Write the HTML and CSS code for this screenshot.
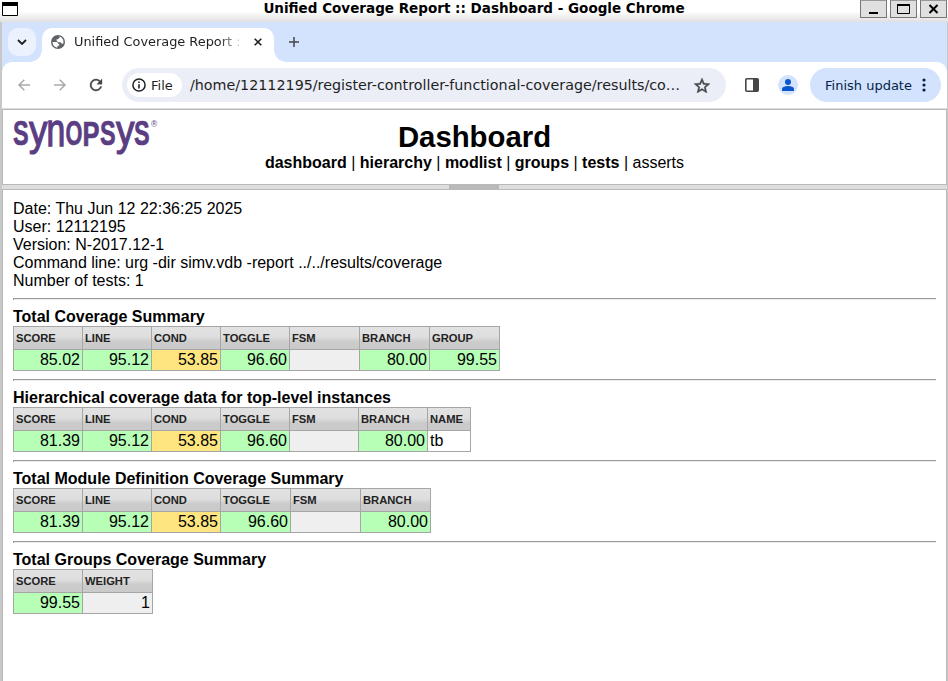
FILE: index.html
```html
<!DOCTYPE html>
<html lang="en">
<head>
<meta charset="utf-8">
<title>Unified Coverage Report :: Dashboard</title>
<link rel="stylesheet" href="styles.css">
</head>
<body>
<header class="titlebar">
  <svg class="window-menu" width="16" height="14" viewBox="0 0 16 14"><path d="M.5.5h15v13H.5z" fill="#fff" stroke="#000"/><path d="M0 0h16v4H0z"/></svg>
  <span class="window-title">Unified Coverage Report :: Dashboard - Google Chrome</span>
  <div class="window-buttons">
    <span class="wbtn"><svg width="25" height="16" viewBox="0 0 25 16"><path d="M8 11h9v2H8z"/></svg></span>
    <span class="wbtn"><svg width="25" height="16" viewBox="0 0 25 16"><path d="M6.500 4v8.500h12V4" fill="none" stroke="#000"/><path d="M6 3h13v2H6z"/></svg></span>
    <span class="wbtn"><svg width="25" height="16" viewBox="0 0 25 16"><path d="M8.500 4l8 8M16.500 4l-8 8" fill="none" stroke="#000" stroke-width="2"/></svg></span>
  </div>
</header>
<div class="window">
  <div class="tabstrip">
    <span class="tab-search"><svg width="10" height="6" viewBox="0 0 10 6"><path d="M1 1l4 4 4-4" fill="none" stroke="#1f1f1f" stroke-width="1.800"/></svg></span>
    <div class="tab">
      <svg class="globe" width="14" height="14" viewBox="0 0 14 14"><circle cx="7" cy="7" r="7" fill="#5f6368"/><path d="M1.500 7h3.800c1.300 0 1.600.7 1.600 1.700h1.300v2H6.500v1.800C3.800 12.500 1.500 10 1.500 7zM8.500 1.600v1.200L7 4.200H5.600v1.500l1.600 1.500h2.300l1.500 1.600h1.200c1-3-.7-6.300-3.700-7.200z" fill="#fff"/></svg>
      <span class="tab-title">Unified Coverage Report :</span>
      <svg width="8" height="8" viewBox="0 0 8 8"><path d="M.7.7l6.600 6.600M7.300.7L.7 7.300" stroke="#1f1f1f" stroke-width="1.600"/></svg>
    </div>
    <svg class="plus" width="10" height="10" viewBox="0 0 10 10"><path d="M5 0v10M0 5h10" stroke="#444746" stroke-width="1.500"/></svg>
  </div>
  <div class="toolbar">
    <div class="nav-icons">
      <svg width="12" height="12" viewBox="0 0 12 12"><path d="M12 6H1M6.300.7L1 6l5.300 5.300" fill="none" stroke="#a9abad" stroke-width="1.500"/></svg>
      <svg width="12" height="12" viewBox="0 0 12 12"><path d="M0 6h11M5.700.7L11 6l-5.300 5.300" fill="none" stroke="#a9abad" stroke-width="1.500"/></svg>
      <svg width="12" height="12" viewBox="4 4 16 16"><path fill="#444746" stroke="#444746" stroke-width=".4" d="M17.650 6.350C16.200 4.900 14.210 4 12 4c-4.420 0-7.990 3.580-7.990 8s3.570 8 7.990 8c3.730 0 6.840-2.550 7.730-6h-2.080c-.820 2.330-3.040 4-5.650 4-3.310 0-6-2.690-6-6s2.690-6 6-6c1.660 0 3.140.690 4.220 1.780L13 11h7V4l-2.350 2.350z"/></svg>
    </div>
    <div class="omnibox">
      <span class="chip"><svg width="14" height="14" viewBox="0 0 14 14"><circle cx="7" cy="7" r="6.100" fill="none" stroke="#202124" stroke-width="1.500"/><path d="M6.200 6.200h1.600V10.500H6.200zM6.200 3.500h1.600v1.500H6.200z" fill="#202124"/></svg>File</span>
      <span class="url">/home/12112195/register-controller-functional-coverage/results/co…</span>
      <svg class="star" width="16" height="15" viewBox="2 2 20 19"><path fill="#444746" stroke="#444746" stroke-width=".6" d="M22 9.240l-7.190-.620L12 2 9.190 8.630 2 9.240l5.460 4.730L5.820 21 12 17.270 18.180 21l-1.630-7.030L22 9.240zM12 15.400l-3.760 2.270 1-4.280-3.320-2.880 4.380-.380L12 6.100l1.710 4.040 4.380.380-3.320 2.880 1 4.280L12 15.400z"/></svg>
    </div>
    <svg class="panel" width="14" height="14" viewBox="0 0 14 14"><rect x=".8" y=".8" width="12.400" height="12.400" rx="1" fill="none" stroke="#444746" stroke-width="1.600"/><path d="M8 1h5v12H8z" fill="#444746"/></svg>
    <svg class="avatar" width="20" height="20" viewBox="0 0 20 20"><circle cx="10" cy="10" r="10" fill="#d3e3fd"/><circle cx="10" cy="7" r="3" fill="#0b57d0"/><path d="M4 16v-2c0-2.300 4-3 6-3s6 .7 6 3v2z" fill="#0b57d0"/></svg>
    <div class="update">Finish update<svg width="4" height="14" viewBox="0 0 4 14"><g fill="#041e49"><circle cx="2" cy="2" r="1.600"/><circle cx="2" cy="7" r="1.600"/><circle cx="2" cy="12" r="1.600"/></g></svg></div>
  </div>
  <div class="frames">
    <div class="frame-top">
      <svg class="logo" width="150" height="36" viewBox="0 0 150 36"><g class="logo-name">
        <text class="cap" transform="translate(0 25) scale(.68 1)">S</text><text class="low-y" transform="translate(16 25) scale(.86 1)">y</text><text class="low-n" transform="translate(33.500 25.500) scale(.74 1)">n</text><text class="cap" transform="translate(52.500 25) scale(.63 1)">O</text><text class="cap" transform="translate(69.500 25.500) scale(.74 1)">P</text><text class="cap" transform="translate(87 25) scale(.68 1)">S</text><text class="low-y" transform="translate(103 25) scale(.86 1)">y</text><text class="cap" transform="translate(121 25) scale(.68 1)">S</text></g><text class="logo-mark" x="138" y="7">®</text></svg>
      <div class="heading">
        <h1>Dashboard</h1>
        <nav><b>dashboard</b> | <b>hierarchy</b> | <b>modlist</b> | <b>groups</b> | <b>tests</b> | asserts</nav>
      </div>
    </div>
    <div class="splitter"><span></span></div>
    <main>
      <div class="info">Date: Thu Jun 12 22:36:25 2025<br>User: 12112195<br>Version: N-2017.12-1<br>Command line: urg -dir simv.vdb -report ../../results/coverage<br>Number of tests: 1</div>
      <hr>
      <h2>Total Coverage Summary</h2>
      <table class="t-total">
        <colgroup><col class="c68" span="4"><col class="c69" span="3"></colgroup>
        <tr><th>SCORE</th><th>LINE</th><th>COND</th><th>TOGGLE</th><th>FSM</th><th>BRANCH</th><th>GROUP</th></tr>
        <tr><td class="good">85.02</td><td class="good">95.12</td><td class="mid">53.85</td><td class="good">96.60</td><td class="none"></td><td class="good">80.00</td><td class="good">99.55</td></tr>
      </table>
      <hr>
      <h2>Hierarchical coverage data for top-level instances</h2>
      <table class="t-hier">
        <colgroup><col class="c68" span="6"><col class="c42"></colgroup>
        <tr><th>SCORE</th><th>LINE</th><th>COND</th><th>TOGGLE</th><th>FSM</th><th>BRANCH</th><th>NAME</th></tr>
        <tr><td class="good">81.39</td><td class="good">95.12</td><td class="mid">53.85</td><td class="good">96.60</td><td class="none"></td><td class="good">80.00</td><td class="name">tb</td></tr>
      </table>
      <hr>
      <h2>Total Module Definition Coverage Summary</h2>
      <table class="t-module">
        <colgroup><col class="c68" span="3"><col class="c69" span="3"></colgroup>
        <tr><th>SCORE</th><th>LINE</th><th>COND</th><th>TOGGLE</th><th>FSM</th><th>BRANCH</th></tr>
        <tr><td class="good">81.39</td><td class="good">95.12</td><td class="mid">53.85</td><td class="good">96.60</td><td class="none"></td><td class="good">80.00</td></tr>
      </table>
      <hr>
      <h2>Total Groups Coverage Summary</h2>
      <table class="t-groups">
        <colgroup><col class="c68"><col class="c69"></colgroup>
        <tr><th>SCORE</th><th>WEIGHT</th></tr>
        <tr><td class="good">99.55</td><td class="none">1</td></tr>
      </table>
    </main>
  </div>
</div>
</body>
</html>
```
FILE: styles.css
```css
* { box-sizing: border-box; }
body { margin: 0; height: 681px; overflow: hidden; display: flex; flex-direction: column; background: #fff; color: #000; font-family: "Liberation Sans", Arial, sans-serif; }
svg { display: block; flex: none; }
.titlebar { height: 22px; flex: none; display: grid; grid-template-columns: 110px 1fr 110px; background: linear-gradient(#fff 0, #fff 11px, #e0e0e0 22px); }
.window-menu { margin: 2px 0 0 2px; }
.window-title { text-align: center; font: bold 13.520px/17px "DejaVu Sans", sans-serif; white-space: nowrap; }
.window-buttons { display: flex; gap: 3px; padding-left: 22px; }
.wbtn { width: 27px; height: 18px; flex: none; border: 1px solid #777; border-top-color: #999; background: #e0e0e0; }
.window { flex: 1; min-height: 0; display: flex; flex-direction: column; border-left: 2px solid #c8c8c8; border-right: 1px solid #c8c8c8; background: #d3e3fd; }
.tabstrip { height: 40px; flex: none; display: flex; align-items: center; font: 13px/16px "DejaVu Sans", sans-serif; color: #1f1f1f; }
.tab-search { width: 28px; height: 28px; margin-left: 6px; border-radius: 10px; background: #ebf2fe; display: flex; align-items: center; justify-content: center; }
.tab { position: relative; width: 232px; height: 34px; margin: 6px 0 0 6px; padding: 0 12px 6px 9px; border-radius: 10px 10px 0 0; background: #fff; display: flex; align-items: center; }
.tab::before, .tab::after { content: ""; position: absolute; bottom: 0; width: 12px; height: 12px; }
.tab::before { left: -12px; background: radial-gradient(circle at 0 0, transparent 11.500px, #fff 12px); }
.tab::after { right: -12px; background: radial-gradient(circle at 100% 0, transparent 11.500px, #fff 12px); }
.tab-title { width: 170px; flex: none; margin: 0 10px 0 9px; font-size: 12.900px; white-space: nowrap; -webkit-mask-image: linear-gradient(90deg, #000 145px, transparent 170px); mask-image: linear-gradient(90deg, #000 145px, transparent 170px); }
.plus { margin-left: 15px; }
.toolbar { height: 46px; flex: none; display: flex; align-items: center; border-radius: 10px 10px 0 0; background: #fff; font-family: "DejaVu Sans", sans-serif; }
.nav-icons { width: 120px; display: flex; align-items: center; gap: 24px; padding-left: 16px; }
.nav-icons svg { overflow: visible; }
.omnibox { width: 604px; height: 34px; padding: 0 16px 0 5px; border-radius: 17px; background: #ebeef7; display: flex; align-items: center; color: #1f1f1f; }
.chip { width: 55px; height: 24px; padding-left: 5px; border-radius: 12px; background: #fff; display: flex; align-items: center; gap: 5px; font-size: 13px; }
.url { flex: 1; margin-left: 8px; font-size: 14.290px; white-space: nowrap; }
.panel { margin-left: 19px; }
.avatar { margin-left: 19px; }
.update { width: 131px; height: 34px; margin-left: 12px; border-radius: 17px; background: #d3e3fd; display: flex; align-items: center; padding-left: 15px; gap: 10px; font-size: 13px; color: #041e49; white-space: nowrap; }
.frames { flex: 1; min-height: 0; display: flex; flex-direction: column; border-top: 1px solid #ddd; background: #fff; }
.frame-top { height: 76px; flex: none; display: grid; grid-template-columns: 150px 1fr 151px; border: 1px solid #b9b9b9; padding: 8px 9px 0 10px; }
.logo { margin-top: 2px; overflow: visible; }
.logo-name { font-family: "Liberation Sans", sans-serif; font-weight: bold; fill: #5a3d82; stroke: #5a3d82; stroke-width: .7px; }
.cap { font-size: 34.500px; }
.low-y { font-size: 43px; font-weight: normal; stroke-width: 1.200px; }
.low-n { font-size: 45.500px; font-weight: normal; stroke-width: 1.400px; }
.logo-mark { font: 8.500px "Liberation Sans", sans-serif; fill: #5a3d82; }
.heading { text-align: center; }
h1 { margin: 2px 0 0; font-size: 29.330px; line-height: 34px; }
nav { font-size: 16px; line-height: 18px; white-space: nowrap; }
.splitter { height: 4px; flex: none; display: flex; justify-content: center; padding-right: 1px; background: #ddd; }
.splitter span { width: 50px; background: #b9b9b9; }
main { flex: 1; min-height: 0; border: solid #b9b9b9; border-width: 1px 1px 0; padding: 10px; font-size: 16px; line-height: 18px; }
hr { height: 2px; margin: 8px 0; border: 0 solid #9a9a9a; border-top-width: 1px; border-left-width: 1px; background: #eee; }
h2 { margin: 0; font-size: 16px; line-height: 18px; }
table { table-layout: fixed; border-collapse: separate; border-spacing: 1px; background: #a6a6a6; }
.t-total { width: 487px; }
.t-hier { width: 458px; }
.t-module { width: 418px; }
.t-groups { width: 140px; }
.c68 { width: 68px; }
.c69 { width: 69px; }
.c42 { width: 42px; }
th { height: 22px; padding: 0 2px; text-align: left; font-size: 11.200px; line-height: 13px; color: #222; background: linear-gradient(#e2e2e2 0, #dedede 45%, #cbcbcb 68%, #cacaca 100%); }
td { height: 20px; padding: 0 2px; text-align: right; line-height: 18px; background: #fff; }
.good { background: #b7ffb7; }
.mid { background: #ffe580; }
.none { background: #efefef; }
.name { text-align: left; }
```
